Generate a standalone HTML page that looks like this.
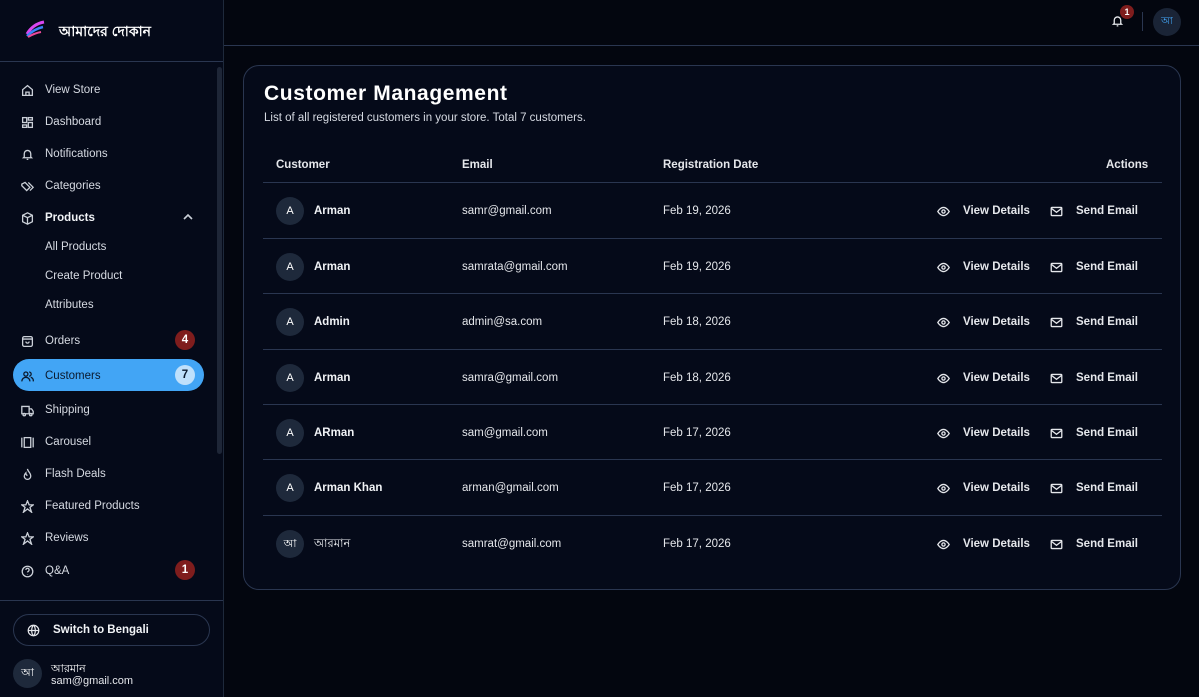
<!DOCTYPE html>
<html><head><meta charset="utf-8"><style>
*{box-sizing:border-box;margin:0;padding:0}
body{width:1199px;height:697px;background:#03060f;font-family:"Liberation Sans","Noto Sans CJK SC",sans-serif;color:#e5e7eb;position:relative;overflow:hidden;font-size:11.5px}
.sb{position:absolute;left:0;top:0;width:224px;height:697px;background:#050a19;border-right:1px solid #1e293b}
.logo{position:absolute;left:0;top:0;width:223px;height:62px;border-bottom:1px solid #2a3650}
.logo .t{position:absolute;left:59px;top:20px;font-size:14px;font-weight:bold;color:#fff}
.it{position:absolute;left:21px;height:20px;display:flex;align-items:center;color:#d6dae2;font-size:11.5px;margin-top:1px}
.it svg{width:13px;height:13px;margin-right:11px;stroke:#cbd0d8;fill:none;stroke-width:1.6}
.sub{position:absolute;left:45px;color:#d6dae2;font-size:11.5px;margin-top:1px}
.badge{position:absolute;left:175px;width:20px;height:20px;border-radius:10px;background:#7f1d1d;color:#fff;font-weight:bold;font-size:11.5px;text-align:center;line-height:20px}
.pill{position:absolute;left:13px;top:359px;width:191px;height:32px;border-radius:16px;background:#42a5f5}
.scroll{position:absolute;left:217px;top:67px;width:5px;height:387px;border-radius:3px;background:#1e2637}
.top{position:absolute;left:224px;top:0;right:0;height:46px;border-bottom:1px solid #2a3650}
.card{position:absolute;left:243px;top:65px;width:938px;height:525px;border:1px solid #2a3650;border-radius:16px;background:#050a19}
h1{position:absolute;left:20px;top:16px;font-size:21px;font-weight:bold;color:#fff;letter-spacing:0.6px}
.desc{position:absolute;left:20px;top:46px;font-size:11.5px;color:#d6dae2}
.th{position:absolute;top:92px;font-size:11.5px;color:#e5e7eb;font-weight:600;line-height:14px}
.row{position:absolute;left:19px;width:899px;height:55px;border-top:1px solid #2a3650}
.row>div{line-height:14px}
.av{position:absolute;left:13px;top:14px;width:28px;height:28px;border-radius:14px;background:#1e293b;color:#fff;text-align:center;line-height:28px!important;font-size:11px}
.nm{position:absolute;left:51px;top:21px;font-weight:bold;color:#f1f3f6}
.em{position:absolute;left:199px;top:21px;color:#e5e7eb}
.dt{position:absolute;left:400px;top:21px;color:#e5e7eb}
.vd{position:absolute;left:674px;top:21px;display:flex;align-items:center;font-weight:bold}
.se{position:absolute;left:787px;top:21px;display:flex;align-items:center;font-weight:bold}
.row svg{width:13px;height:13px;stroke:#e5e7eb;fill:none;stroke-width:1.6;margin-right:13px}
</style></head><body>
<div class="sb">
 <div class="logo">
  <svg style="position:absolute;left:25px;top:20px" width="20" height="18" viewBox="0 0 20 18"><path d="M2 14 Q8 4 19 2" stroke="#d946ef" stroke-width="3" fill="none"/><path d="M2 16 Q9 9 18 7" stroke="#3b82f6" stroke-width="2.5" fill="none"/><path d="M3 17 Q10 13 16 12" stroke="#ec4899" stroke-width="2" fill="none"/></svg>
  <div class="t">আমাদের দোকান</div>
 </div>
 <div class="scroll"></div>
 <div class="it" style="top:79px"><svg viewBox="0 0 16 16"><path d="M2 7l6-5 6 5v7H2z M6 14v-4h4v4"/></svg>View Store</div>
 <div class="it" style="top:111px"><svg viewBox="0 0 16 16"><rect x="2" y="2" width="5" height="6"/><rect x="9" y="2" width="5" height="3"/><rect x="9" y="8" width="5" height="6"/><rect x="2" y="11" width="5" height="3"/></svg>Dashboard</div>
 <div class="it" style="top:143px"><svg viewBox="0 0 16 16"><path d="M4 11V7a4 4 0 018 0v4l1 1H3z M7 14h2"/></svg>Notifications</div>
 <div class="it" style="top:175px"><svg viewBox="0 0 16 16"><path d="M1 5l4-2 6 6-4 4-6-6z M9 3l6 6-4 4"/></svg>Categories</div>
 <div class="it" style="top:207px;font-weight:bold;color:#f1f3f6"><svg viewBox="0 0 16 16"><path d="M8 1l6 3v8l-6 3-6-3V4z M2 4l6 3 6-3 M8 7v8"/></svg>Products</div>
 <svg style="position:absolute;left:183px;top:213px" width="10" height="8" viewBox="0 0 10 8"><path d="M1 6l4-4 4 4" stroke="#cbd0d8" stroke-width="1.6" fill="none"/></svg>
 <div class="sub" style="top:240px">All Products</div>
 <div class="sub" style="top:269px">Create Product</div>
 <div class="sub" style="top:298px">Attributes</div>
 <div class="it" style="top:330px"><svg viewBox="0 0 16 16"><rect x="2" y="2" width="12" height="12" rx="2"/><path d="M2 5h12 M6 8a2 2 0 004 0"/></svg>Orders</div>
 <div class="badge" style="top:330px">4</div>
 <div class="pill"></div>
 <div class="it" style="top:365px;color:#0b1a2e"><svg viewBox="0 0 16 16" style="stroke:#0b1a2e"><circle cx="6" cy="5" r="2.5"/><path d="M1 14a5 5 0 0110 0 M10 2.5a2.5 2.5 0 010 5 M12 9a4 4 0 013 5"/></svg>Customers</div>
 <div class="badge" style="top:365px;background:#bfe0fb;color:#0b1a2e">7</div>
 <div class="it" style="top:399px"><svg viewBox="0 0 16 16"><path d="M1 3h9v9H1z M10 6h3l2 3v3h-5"/><circle cx="4" cy="13" r="1.5"/><circle cx="12" cy="13" r="1.5"/></svg>Shipping</div>
 <div class="it" style="top:431px"><svg viewBox="0 0 16 16"><rect x="4" y="2" width="8" height="12"/><path d="M1 2v12 M15 2v12"/></svg>Carousel</div>
 <div class="it" style="top:463px"><svg viewBox="0 0 16 16"><path d="M8 1c0 3 4 5 4 9a4 4 0 01-8 0c0-2 1-3 2-4 0 2 1 3 2 3"/></svg>Flash Deals</div>
 <div class="it" style="top:495px"><svg viewBox="0 0 16 16"><path d="M8 1l2 5h5l-4 3 2 6-5-4-5 4 2-6-4-3h5z"/></svg>Featured Products</div>
 <div class="it" style="top:527px"><svg viewBox="0 0 16 16"><path d="M8 1l2 5h5l-4 3 2 6-5-4-5 4 2-6-4-3h5z"/></svg>Reviews</div>
 <div class="it" style="top:560px"><svg viewBox="0 0 16 16"><circle cx="8" cy="8" r="6.5"/><path d="M6 6a2 2 0 014 0c0 2-2 2-2 3 M8 11.5v.5"/></svg>Q&amp;A</div>
 <div class="badge" style="top:560px">1</div>
 <div style="position:absolute;left:0;top:600px;width:223px;border-top:1px solid #2a3650"></div>
 <div style="position:absolute;left:13px;top:614px;width:197px;height:32px;border:1px solid #2a3650;border-radius:16px;display:flex;align-items:center;padding-left:13px;font-weight:bold;color:#f1f3f6"><svg width="13" height="13" viewBox="0 0 16 16" style="stroke:#e5e7eb;fill:none;stroke-width:1.5;margin-right:13px"><circle cx="8" cy="8" r="6.5"/><path d="M1.5 8h13 M8 1.5c-3 3-3 10 0 13 M8 1.5c3 3 3 10 0 13"/></svg>Switch to Bengali</div>
 <div style="position:absolute;left:13px;top:659px;width:29px;height:29px;border-radius:15px;background:#1e293b;color:#fff;text-align:center;line-height:29px;font-size:11px">আ</div>
 <div style="position:absolute;left:51px;top:660px;font-size:11px;color:#fff">আরমান</div>
 <div style="position:absolute;left:51px;top:675px;font-size:11px;color:#e5e7eb">sam@gmail.com</div>
</div>
<div class="top">
 <svg style="position:absolute;left:887px;top:14px" width="13" height="14" viewBox="0 0 16 16"><path d="M4 11V7a4 4 0 018 0v4l1 1H3z M7 14h2" stroke="#e5e7eb" stroke-width="1.6" fill="none"/></svg>
 <div style="position:absolute;left:896px;top:5px;width:14px;height:14px;border-radius:7px;background:#7f1d1d;color:#fff;font-size:9px;text-align:center;line-height:14px;font-weight:bold">1</div>
 <div style="position:absolute;left:918px;top:12px;width:1px;height:19px;background:#2a3650"></div>
 <div style="position:absolute;left:929px;top:8px;width:28px;height:28px;border-radius:14px;background:#1a2436;color:#42a5f5;text-align:center;line-height:28px;font-size:10px">আ</div>
</div>
<div class="card">
 <h1>Customer Management</h1>
 <div class="desc">List of all registered customers in your store. Total 7 customers.</div>
 <div class="th" style="left:32px">Customer</div>
 <div class="th" style="left:218px">Email</div>
 <div class="th" style="left:419px">Registration Date</div>
 <div class="th" style="left:862px">Actions</div>
 <div class="row" style="top:116px"><div class="av">A</div><div class="nm">Arman</div><div class="em">samr@gmail.com</div><div class="dt">Feb 19, 2026</div><div class="vd"><svg viewBox="0 0 16 16"><path d="M1 8s3-5 7-5 7 5 7 5-3 5-7 5-7-5-7-5z"/><circle cx="8" cy="8" r="2"/></svg>View Details</div><div class="se"><svg viewBox="0 0 16 16"><rect x="1.5" y="3" width="13" height="10" rx="1"/><path d="M1.5 4l6.5 5 6.5-5"/></svg>Send Email</div></div>
 <div class="row" style="top:172px"><div class="av">A</div><div class="nm">Arman</div><div class="em">samrata@gmail.com</div><div class="dt">Feb 19, 2026</div><div class="vd"><svg viewBox="0 0 16 16"><path d="M1 8s3-5 7-5 7 5 7 5-3 5-7 5-7-5-7-5z"/><circle cx="8" cy="8" r="2"/></svg>View Details</div><div class="se"><svg viewBox="0 0 16 16"><rect x="1.5" y="3" width="13" height="10" rx="1"/><path d="M1.5 4l6.5 5 6.5-5"/></svg>Send Email</div></div>
 <div class="row" style="top:227px"><div class="av">A</div><div class="nm">Admin</div><div class="em">admin@sa.com</div><div class="dt">Feb 18, 2026</div><div class="vd"><svg viewBox="0 0 16 16"><path d="M1 8s3-5 7-5 7 5 7 5-3 5-7 5-7-5-7-5z"/><circle cx="8" cy="8" r="2"/></svg>View Details</div><div class="se"><svg viewBox="0 0 16 16"><rect x="1.5" y="3" width="13" height="10" rx="1"/><path d="M1.5 4l6.5 5 6.5-5"/></svg>Send Email</div></div>
 <div class="row" style="top:283px"><div class="av">A</div><div class="nm">Arman</div><div class="em">samra@gmail.com</div><div class="dt">Feb 18, 2026</div><div class="vd"><svg viewBox="0 0 16 16"><path d="M1 8s3-5 7-5 7 5 7 5-3 5-7 5-7-5-7-5z"/><circle cx="8" cy="8" r="2"/></svg>View Details</div><div class="se"><svg viewBox="0 0 16 16"><rect x="1.5" y="3" width="13" height="10" rx="1"/><path d="M1.5 4l6.5 5 6.5-5"/></svg>Send Email</div></div>
 <div class="row" style="top:338px"><div class="av">A</div><div class="nm">ARman</div><div class="em">sam@gmail.com</div><div class="dt">Feb 17, 2026</div><div class="vd"><svg viewBox="0 0 16 16"><path d="M1 8s3-5 7-5 7 5 7 5-3 5-7 5-7-5-7-5z"/><circle cx="8" cy="8" r="2"/></svg>View Details</div><div class="se"><svg viewBox="0 0 16 16"><rect x="1.5" y="3" width="13" height="10" rx="1"/><path d="M1.5 4l6.5 5 6.5-5"/></svg>Send Email</div></div>
 <div class="row" style="top:393px"><div class="av">A</div><div class="nm">Arman Khan</div><div class="em">arman@gmail.com</div><div class="dt">Feb 17, 2026</div><div class="vd"><svg viewBox="0 0 16 16"><path d="M1 8s3-5 7-5 7 5 7 5-3 5-7 5-7-5-7-5z"/><circle cx="8" cy="8" r="2"/></svg>View Details</div><div class="se"><svg viewBox="0 0 16 16"><rect x="1.5" y="3" width="13" height="10" rx="1"/><path d="M1.5 4l6.5 5 6.5-5"/></svg>Send Email</div></div>
 <div class="row" style="top:449px"><div class="av">আ</div><div class="nm" style="font-weight:normal">আরমান</div><div class="em">samrat@gmail.com</div><div class="dt">Feb 17, 2026</div><div class="vd"><svg viewBox="0 0 16 16"><path d="M1 8s3-5 7-5 7 5 7 5-3 5-7 5-7-5-7-5z"/><circle cx="8" cy="8" r="2"/></svg>View Details</div><div class="se"><svg viewBox="0 0 16 16"><rect x="1.5" y="3" width="13" height="10" rx="1"/><path d="M1.5 4l6.5 5 6.5-5"/></svg>Send Email</div></div>
</div>
</body></html>
